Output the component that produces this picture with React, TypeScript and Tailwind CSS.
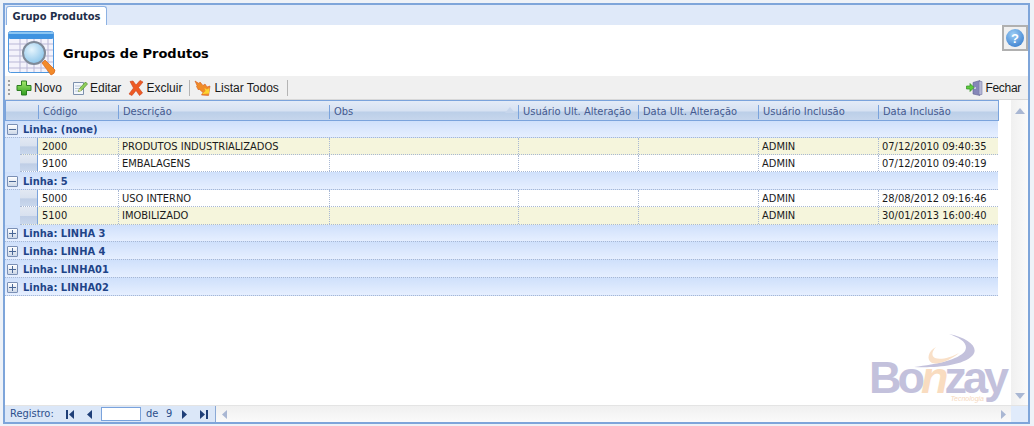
import React from "react";

const cols = "grid-cols-[32px_80px_211px_189px_120px_120px_120px_121px]";
const FONT = "font-['Liberation_Sans',Arial,sans-serif]";
const DATA = "font-['DejaVu_Sans_Condensed','DejaVu_Sans',sans-serif] text-[11px]";

function PlusIcon() {
  return (
    <svg width="16" height="16" viewBox="0 0 16 16">
      <defs>
        <linearGradient id="pg" x1="0" y1="0" x2="0" y2="1">
          <stop offset="0" stopColor="#a6ea6e" />
          <stop offset="1" stopColor="#2f9e1f" />
        </linearGradient>
      </defs>
      <path d="M5.500 1h5v4.500h4.500v5h-4.500v4.500h-5v-4.500h-4.500v-5h4.500z" fill="url(#pg)" stroke="#2c7d20" strokeWidth="1" />
    </svg>
  );
}
function EditIcon() {
  return (
    <svg width="16" height="16" viewBox="0 0 16 16">
      <path d="M1.500 2.500h10v12h-10z" fill="#f3f7fc" stroke="#7d90ad" />
      <path d="M3 6h6M3 8.500h5M3 11h4" stroke="#b9c6d8" />
      <path d="M6.500 11.500l1-3 6-6.500 2 2-6 6.500z" fill="#8fcf5a" stroke="#4f8a2b" strokeWidth=".7" />
      <path d="M6.500 11.500l1-3 2 1.800z" fill="#f2d9a6" />
    </svg>
  );
}
function XIcon() {
  return (
    <svg width="16" height="16" viewBox="0 0 16 16">
      <path d="M2 1.500l3-.5 3 4 4-4.500 3 1.500-4.500 5.500 4 5.500-3 2.500-3.500-5-4 5-3-1.500 4.500-6z" fill="#ee5a24" stroke="#c9401a" strokeWidth=".6" />
    </svg>
  );
}
function FlameIcon() {
  return (
    <svg width="18" height="18" viewBox="0 0 18 18">
      <path d="M1 2l4 2.500 1-1.500 3 3.500 2-1.500 2 3 3-1-1.500 9.500-7-.5 1.500-2.500-4-3.500-.5 1-2-3.500.5-1z" fill="#f08c28" stroke="#d85c1c" strokeWidth=".6" />
      <path d="M8 15l7-.5.5-5.500-2.500 1.500-2.500-1.500 1 3z" fill="#fcd431" />
    </svg>
  );
}
function ExitIcon() {
  return (
    <svg width="17" height="16" viewBox="0 0 17 16">
      <path d="M7 2.500l7-2v15l-7-1.500z" fill="#8587b8" stroke="#5f6190" strokeWidth=".6" />
      <path d="M13 1.500h3v13h-3z" fill="#b6b8d6" stroke="#7b7da8" strokeWidth=".6" />
      <circle cx="9" cy="8" r=".9" fill="#e8e8f5" />
      <path d="M.5 6h3.500v-2.500l4 4-4 4v-2.500h-3.500z" fill="#5ecb3c" stroke="#2f8f22" strokeWidth=".7" />
    </svg>
  );
}
function ReportIcon() {
  const v = [12, 19, 26, 33, 40];
  const h = [13, 19, 25, 31, 37];
  return (
    <svg width="48" height="46" viewBox="0 0 48 46">
      <defs>
        <radialGradient id="lens" cx=".4" cy=".35" r=".8">
          <stop offset="0" stopColor="#e6f5fd" />
          <stop offset="1" stopColor="#79bbe6" />
        </radialGradient>
      </defs>
      <rect x=".5" y=".5" width="45" height="41" rx="2" fill="#f4f3fb" stroke="#4d97df" />
      <rect x="1" y="1" width="44" height="7" rx="1" fill="#3f93e0" />
      <rect x="1" y="1" width="44" height="2" fill="#8cc6f2" />
      {v.map((x) => (
        <path key={x} d={`M${x} 8V41`} stroke="#b9b7d6" />
      ))}
      {h.map((y) => (
        <path key={y} d={`M1 ${y}H45`} stroke="#b9b7d6" />
      ))}
      <path d="M34 32l3-3 10 10q0 4-4 5z" fill="#f28a2a" stroke="#d9661a" strokeWidth=".7" />
      <circle cx="26" cy="22" r="11" fill="url(#lens)" stroke="#7f8a98" strokeWidth="2" />
    </svg>
  );
}

function Sep({ className = "" }: { className?: string }) {
  return <div className={`h-[16px] w-px bg-[#b4b4b4] ${className}`} />;
}

function ToolBtn({ icon, label, className = "" }: { icon: React.ReactNode; label: string; className?: string }) {
  return (
    <div className={`flex h-full items-center gap-[2px] ${className}`}>
      {icon}
      <span>{label}</span>
    </div>
  );
}

const headers = ["Código", "Descrição", "Obs", "Usuário Ult. Alteração", "Data Ult. Alteração", "Usuário Inclusão", "Data Inclusão"];

function Header() {
  return (
    <div className={`grid h-[20px] ${cols} border-b border-[#7aa3dc] bg-[linear-gradient(#e3ebf7_0%,#d7e2f2_50%,#bccfe8_60%,#c6d6ec_100%)] text-[#44598f] ${DATA}`}>
      <div />
      {headers.map((h) => (
        <div key={h} className="relative mb-[1px] mt-[4px] flex items-center whitespace-nowrap border-l border-[#7aa3dc] pl-[4px]">
          {h}
          {h === "Obs" && (
            <svg className="absolute right-[3px] top-[2px]" width="10" height="6" viewBox="0 0 10 6">
              <path d="M5 0l5 6H0z" fill="#c7d6ec" />
            </svg>
          )}
        </div>
      ))}
    </div>
  );
}

function Expander({ open }: { open: boolean }) {
  return (
    <div className="ml-[2px] mr-[5px] flex h-[11px] w-[11px] shrink-0 items-center justify-center rounded-[1px] border border-[#7b90b5] bg-[linear-gradient(#ffffff,#cdd8e8)]">
      <svg width="7" height="7" viewBox="0 0 7 7">
        <path d={open ? "M0 3.500H7" : "M0 3.500H7M3.500 0V7"} stroke="#4a6796" strokeWidth="1" />
      </svg>
    </div>
  );
}

function Group({ label, open, h, pad = "pt-[2px]" }: { label: string; open: boolean; h: string; pad?: string }) {
  return (
    <div className={`flex w-[993px] ${h} ${pad} items-center border-b border-dotted border-[#a8b8d4] bg-[linear-gradient(#cfe0fb,#e6efff)] font-bold text-[#1f4488] ${DATA}`}>
      <Expander open={open} />
      <span>{label}</span>
    </div>
  );
}

function Row({ cells, alt, h, pad = "pt-[1px]" }: { cells: string[]; alt: boolean; h: string; pad?: string }) {
  return (
    <div className="flex w-[993px]">
      <div className="w-[15px] shrink-0 bg-[#d6e5fb]" />
      <div className={`grid ${h} flex-1 grid-cols-[18px_80px_211px_189px_120px_120px_120px_120px] border-b border-dotted border-[#a8b8d4] text-[#1a1a1a] ${DATA} ${alt ? "bg-[#f5f5dc]" : "bg-white"}`}>
        <div className="border-r border-[#7aa3dc] bg-[linear-gradient(#e2e8f2_0%,#d8e1ef_50%,#bfcee6_55%,#c9d7ec_100%)]" />
        {cells.map((c, i) => (
          <div key={i} className={`flex items-center whitespace-nowrap ${pad} ${i > 0 ? "border-l border-dotted border-[#a8b8d4] pl-[3px]" : "pl-[4px]"}`}>
            {c}
          </div>
        ))}
      </div>
    </div>
  );
}

function Tri({ dir, color = "#1f3f78" }: { dir: "l" | "r" | "u" | "d"; color?: string }) {
  const d = { l: "M5 0v9L0 4.500z", r: "M0 0v9l5-4.500z", u: "M0 6h10L5 0z", d: "M0 0h10L5 6z" }[dir];
  const wh = dir === "l" || dir === "r" ? [5, 9] : [10, 6];
  return (
    <svg width={wh[0]} height={wh[1]} viewBox={`0 0 ${wh[0]} ${wh[1]}`}>
      <path d={d} fill={color} />
    </svg>
  );
}

function Logo() {
  return (
    <div className="pointer-events-none absolute bottom-[17px] right-[21px] h-[71px] w-[138px]">
      <svg className="absolute left-[45px] top-0" width="64" height="36" viewBox="0 0 64 36">
        <path d="M35 0C55 4 66 14 58 22 48 32 20 34 0 33 24 30 44 26 51 17 55 9 46 4 35 0z" fill="#c3c1dc" />
        <path d="M22 13C14 17 12 26 18 29 26 31 38 25 45 19 36 24 26 26 21 24 17 22 18 17 22 13z" fill="#f9e0c8" />
      </svg>
      <div className="absolute left-0 top-[27px] whitespace-nowrap font-['Liberation_Sans',Arial,sans-serif] text-[45px] leading-[34px] font-bold tracking-[-4px] text-[#c3c1dc]">
        Bo<span className="italic text-[#f9dcc0]">n</span>zay
      </div>
      <div className="absolute bottom-[2px] right-[23px] text-[7px] leading-[8px] italic text-[#f6d8bd]">Tecnologia</div>
    </div>
  );
}

export default function App() {
  return (
    <div className={`flex h-[426px] w-[1034px] flex-col bg-[#eef2f8] pb-[2px] pl-[3px] pr-[4px] pt-[3px] text-[12px] leading-[14px] text-[#222] ${FONT}`}>
      <div className="flex min-h-0 flex-1 flex-col border-2 border-[#7ea5da] bg-[#dfe9f9]">
        {/* tab strip */}
        <div className="flex h-[20px] shrink-0 items-end pl-[1px]">
          <div className="flex h-[19px] w-[101px] items-center justify-center rounded-t-[3px] border border-b-0 border-[#8db2e3] bg-white pt-[1px] font-['DejaVu_Sans_Condensed','DejaVu_Sans',sans-serif] text-[11px] font-bold text-[#1e2f4a]">
            Grupo Produtos
          </div>
        </div>
        {/* title */}
        <div className="flex h-[51px] shrink-0 items-center bg-white pl-[3px]">
          <div className="mt-[6px]">
            <ReportIcon />
          </div>
          <div className="ml-[7px] mt-[7px] font-['DejaVu_Sans',Verdana,sans-serif] text-[13px] font-bold text-black">
            Grupos de Produtos
          </div>
          <div className="mb-[25px] ml-auto flex h-[26px] w-[26px] items-center justify-center border-2 border-[#b0b0b0] bg-[#f0f0f0]">
            <div className="flex h-[18px] w-[18px] items-center justify-center rounded-full bg-[radial-gradient(circle_at_40%_30%,#9ccdf5,#2a72c8)] text-[13px] font-bold leading-none text-white">
              ?
            </div>
          </div>
        </div>
        {/* toolbar */}
        <div className="flex h-[24px] shrink-0 items-center border-b border-[#d8d8d8] bg-[#f0f0f0] pl-[3px] pr-[7px] text-[12px] text-[#1a1a1a]">
          <div className="mr-[5px] flex h-[15px] w-[3px] flex-col justify-between">
            {[0, 1, 2, 3].map((i) => (
              <div key={i} className="h-[2px] w-[2px] bg-[#9f9f9f]" />
            ))}
          </div>
          <ToolBtn icon={<PlusIcon />} label="Novo" />
          <ToolBtn className="ml-[10px]" icon={<EditIcon />} label="Editar" />
          <ToolBtn className="ml-[7px]" icon={<XIcon />} label="Excluir" />
          <Sep className="ml-[7px]" />
          <ToolBtn className="ml-[4px]" icon={<FlameIcon />} label="Listar Todos" />
          <Sep className="ml-[8px]" />
          <ToolBtn className="ml-auto tracking-[-0.3px]" icon={<ExitIcon />} label="Fechar" />
        </div>
        {/* grid */}
        <div className="relative flex min-h-0 flex-1 flex-col bg-white">
          <div className="flex min-h-0 flex-1">
            <div className="min-w-0 flex-1 overflow-hidden">
              <div className="w-[994px] border-l border-r border-t border-[#7aa3dc]">
                <Header />
              </div>
              <Group label="Linha: (none)" open h="h-[17px]" pad="pt-[1px]" />
              <Row h="h-[17px]" alt cells={["2000", "PRODUTOS INDUSTRIALIZADOS", "", "", "", "ADMIN", "07/12/2010 09:40:35"]} />
              <Row h="h-[17px]" alt={false} cells={["9100", "EMBALAGENS", "", "", "", "ADMIN", "07/12/2010 09:40:19"]} />
              <Group label="Linha: 5" open h="h-[18px]" />
              <Row h="h-[17px]" alt={false} cells={["5000", "USO INTERNO", "", "", "", "ADMIN", "28/08/2012 09:16:46"]} />
              <Row h="h-[18px]" alt pad="" cells={["5100", "IMOBILIZADO", "", "", "", "ADMIN", "30/01/2013 16:00:40"]} />
              <Group label="Linha: LINHA 3" open={false} h="h-[17px]" pad="pt-[1px]" />
              <Group label="Linha: LINHA 4" open={false} h="h-[18px]" />
              <Group label="Linha: LINHA01" open={false} h="h-[18px]" />
              <Group label="Linha: LINHA02" open={false} h="h-[18px]" />
            </div>
            <div className="flex w-[17px] shrink-0 flex-col items-center justify-between bg-[linear-gradient(90deg,#f0f0f0,#fafafa)] pb-[6px] pl-[1px] pt-[8px]">
              <Tri dir="u" color="#a9b7d3" />
              <Tri dir="d" color="#a9b7d3" />
            </div>
          </div>
          {/* footer */}
          <div className={`flex h-[17px] shrink-0 border-t border-[#e4e4e4] text-[#2d4f8c] ${DATA}`}>
            <div className="flex w-[211px] shrink-0 items-center border-r border-[#8aa9d6] bg-[#dbe7f8] pl-[5px]">
              <span className="w-[52px] shrink-0">Registro:</span>
              <div className="ml-[4px] flex items-center">
                <div className="mr-[1px] h-[9px] w-[2px] bg-[#1f3f78]" />
                <Tri dir="l" />
              </div>
              <div className="ml-[13px]"><Tri dir="l" /></div>
              <div className="ml-[9px] h-[14px] w-[40px] shrink-0 border border-[#7aa3dc] bg-white" />
              <span className="ml-[5px] w-[12px] shrink-0">de</span>
              <span className="ml-[8px] w-[7px] shrink-0">9</span>
              <div className="ml-[9px]"><Tri dir="r" /></div>
              <div className="ml-[13px] flex items-center">
                <Tri dir="r" />
                <div className="ml-[1px] h-[9px] w-[2px] bg-[#1f3f78]" />
              </div>
            </div>
            <div className="flex flex-1 items-center justify-between bg-[linear-gradient(#f0f0f0,#fafafa)] pl-[6px] pr-[5px]">
              <Tri dir="l" color="#a9b7d3" />
              <Tri dir="r" color="#a9b7d3" />
            </div>
            <div className="w-[17px] shrink-0 bg-[#e0ebfb]" />
          </div>
          <Logo />
        </div>
      </div>
    </div>
  );
}
